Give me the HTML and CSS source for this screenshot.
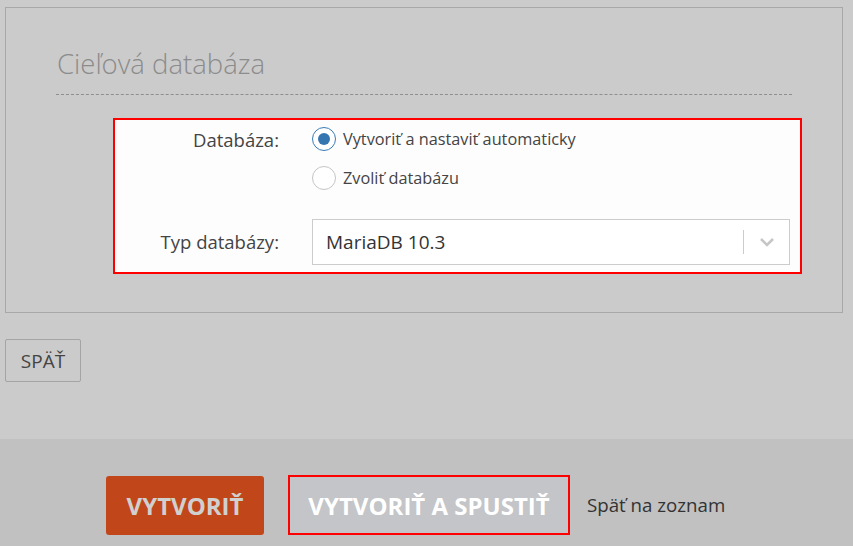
FILE: index.html
```
<!DOCTYPE html>
<html lang="sk">
<head>
<meta charset="utf-8">
<title>Cieľová databáza</title>
<link rel="stylesheet" href="styles.css">
</head>
<body>
<div class="page">
  <section class="panel">
    <h2 class="panel-title">Cieľová databáza</h2>
    <div class="form-box">
      <div class="row">
        <div class="label">Databáza:</div>
        <div class="field radios">
          <label class="radio"><span class="dot checked"></span><span>Vytvoriť a nastaviť automaticky</span></label>
          <label class="radio"><span class="dot"></span><span>Zvoliť databázu</span></label>
        </div>
      </div>
      <div class="row select-row">
        <div class="label">Typ databázy:</div>
        <div class="field">
          <div class="select">
            <span class="select-value">MariaDB 10.3</span>
            <span class="select-sep"></span>
            <span class="select-arrow"><svg width="16" height="10" viewBox="0 0 16 10"><path d="M2 2 L8 8 L14 2" fill="none" stroke="#c6c6c6" stroke-width="2.6"/></svg></span>
          </div>
        </div>
      </div>
    </div>
  </section>
  <div class="back-wrap"><button class="btn-back">SPÄŤ</button></div>
</div>
<footer class="footer">
  <button class="btn btn-primary">VYTVORIŤ</button>
  <button class="btn btn-secondary">VYTVORIŤ A SPUSTIŤ</button>
  <a class="link">Späť na zoznam</a>
</footer>
</body>
</html>
```
FILE: styles.css
```
* { box-sizing: border-box; }
html, body { margin: 0; padding: 0; }
body {
  background: #cbcbcb;
  font-family: "Open Sans", "Noto Sans", sans-serif;
  color: #333;
  width: 853px;
  height: 546px;
  overflow: hidden;
}
.page {
  height: 439px;
  padding: 7px 10px 0 5px;
}
.panel {
  border: 1px solid #a8a8a8;
  height: 306px;
}
.panel-title {
  margin: 0 50px 0 50px;
  padding: 38px 0 12px 1px;
  font-size: 27.5px;
  font-weight: 300;
  color: #8c8c8c;
  line-height: 36px;
  border-bottom: 1px dashed #8e8e8e;
}
.form-box {
  margin: 23px 0 0 107px;
  width: 689px;
  border: 2px solid #f00;
  background: #fdfdfd;
  padding: 0 10px 7px 0;
}
.row {
  display: flex;
  align-items: flex-start;
}
.label {
  width: 164px;
  text-align: right;
  font-size: 18.5px;
  color: #444;
  line-height: 40px;
  flex: none;
}
.field {
  margin-left: 33px;
  flex: 1;
}
.radios { display: flex; flex-direction: column; }
.radio {
  display: flex;
  align-items: center;
  height: 38.5px;
  font-size: 16.3px;
  color: #444;
}
.dot {
  width: 24px;
  height: 24px;
  border-radius: 50%;
  border: 1px solid #c4c4c4;
  background: #fff;
  margin-right: 7px;
  position: relative;
  flex: none;
}
.dot.checked {
  border: 1px solid #3a7ab3;
}
.dot.checked::after {
  content: "";
  position: absolute;
  left: 5px;
  top: 5px;
  width: 12px;
  height: 12px;
  border-radius: 50%;
  background: #3575b0;
}
.select-row { margin-top: 22px; }
.select-row .label { line-height: 46px; }
.select {
  display: flex;
  align-items: center;
  height: 46px;
  border: 1px solid #cccccc;
  background: #fff;
  padding-left: 13px;
}
.select-value {
  flex: 1;
  font-size: 19px;
  color: #333;
}
.select-sep {
  width: 1px;
  height: 24px;
  background: #cccccc;
}
.select-arrow {
  width: 45px;
  display: flex;
  justify-content: center;
  align-items: center;
}
.back-wrap { padding-top: 26px; }
.btn-back {
  width: 76px;
  height: 43px;
  border: 1px solid #a4a4a4;
  border-radius: 2px;
  background: transparent;
  font-family: inherit;
  font-size: 19px;
  color: #444;
  padding: 0;
}
.footer {
  height: 107px;
  background: #c1c1c1;
  display: flex;
  align-items: flex-start;
  padding: 36px 0 0 106px;
}
.btn {
  font-family: inherit;
  font-weight: 700;
  font-size: 24px;
  height: 60px;
  padding: 0;
}
.btn-primary {
  width: 158px;
  height: 59px;
  margin-top: 1px;
  background: #c1461a;
  border: none;
  border-radius: 3px;
  color: #d0d0d0;
}
.btn-secondary {
  width: 282px;
  margin-left: 24px;
  background: #c3c5c8;
  border: 2px solid #f00;
  color: #fff;
}
.link {
  margin-left: 17px;
  line-height: 60px;
  font-size: 18.7px;
  color: #333;
}
```
